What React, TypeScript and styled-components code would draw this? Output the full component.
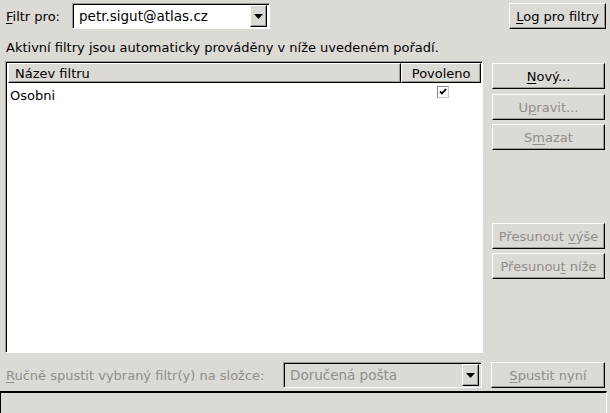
import React from "react";
import styled, { createGlobalStyle, css } from "styled-components";

const Global = createGlobalStyle`
  html, body { margin: 0; padding: 0; background: #dcdad5; }
  body { font-family: "DejaVu Sans", sans-serif; font-size: 13px; color: #000; }
  #root { width: 610px; height: 413px; overflow: hidden; }
`;

const raised = css`
  border: 1px solid;
  border-color: #ffffff #000000 #000000 #ffffff;
  box-shadow: inset -1px -1px 0 #9d9b96;
`;

const sunken = css`
  border: 1px solid;
  border-color: #9d9b96 #ffffff #ffffff #9d9b96;
  box-shadow: inset 1px 1px 0 #000000;
`;

const Window = styled.div`
  width: 610px;
  height: 413px;
  display: flex;
  flex-direction: column;
  box-sizing: border-box;
`;

const TopRow = styled.div`
  display: flex;
  align-items: center;
  height: 26px;
  margin-top: 3px;
  padding: 0 4px 0 6px;
`;

const Label = styled.span<{ $disabled?: boolean }>`
  color: ${(p) => (p.$disabled ? "#8f8e8a" : "#000")};
  white-space: pre;
`;

const Combo = styled.div<{ $width: number; $disabled?: boolean }>`
  ${sunken};
  box-sizing: border-box;
  width: ${(p) => p.$width}px;
  height: 26px;
  background: ${(p) => (p.$disabled ? "#dcdad5" : "#ffffff")};
  display: flex;
  align-items: center;
  padding: 0 1px 0 0;
`;

const ComboText = styled.span<{ $disabled?: boolean }>`
  flex: 1;
  padding-left: 6px;
  font-size: 13.5px;
  color: ${(p) => (p.$disabled ? "#8f8e8a" : "#000")};
  white-space: nowrap;
`;

const ArrowBtn = styled.div`
  ${raised};
  box-sizing: border-box;
  width: 17px;
  height: 22px;
  background: #dcdad5;
  display: flex;
  align-items: center;
  justify-content: center;
  margin-right: 1px;
`;

const Spacer = styled.div`
  flex: 1;
`;

const Gap = styled.div<{ $w: number }>`
  width: ${(p) => p.$w}px;
  flex-shrink: 0;
`;

const Button = styled.div<{ $disabled?: boolean; $width?: number }>`
  ${raised};
  box-sizing: border-box;
  width: ${(p) => (p.$width ? `${p.$width}px` : "auto")};
  height: 26px;
  background: #dcdad5;
  display: flex;
  align-items: center;
  justify-content: center;
  color: ${(p) => (p.$disabled ? "#8f8e8a" : "#000")};
  white-space: pre;
  font-size: 13px;
`;

const U = styled.span`
  text-decoration: underline;
  text-underline-offset: 2px;
`;

const Description = styled.div`
  height: 15px;
  margin-top: 11px;
  padding-left: 6px;
  line-height: 15px;
`;

const Main = styled.div`
  display: flex;
  margin-top: 6px;
  padding: 0 5px 0 5px;
  gap: 9px;
  height: 292px;
`;

const List = styled.div`
  ${sunken};
  box-sizing: border-box;
  width: 478px;
  height: 292px;
  background: #ffffff;
  padding: 1px 1px;
  display: flex;
  flex-direction: column;
`;

const HeaderRow = styled.div`
  display: flex;
  height: 20px;
  margin-left: 1px;
`;

const HeaderCell = styled.div<{ $width: number; $align?: string }>`
  ${raised};
  box-sizing: border-box;
  width: ${(p) => p.$width}px;
  height: 20px;
  background: #dcdad5;
  display: flex;
  align-items: center;
  justify-content: ${(p) => p.$align || "flex-start"};
  padding-left: ${(p) => (p.$align ? 0 : 6)}px;
`;

const DataRow = styled.div`
  display: flex;
  height: 24px;
  align-items: center;
  margin-left: 1px;
`;

const DataCell = styled.div<{ $width: number; $center?: boolean }>`
  width: ${(p) => p.$width}px;
  display: flex;
  justify-content: ${(p) => (p.$center ? "center" : "flex-start")};
  padding-left: ${(p) => (p.$center ? 0 : 2)}px;
  box-sizing: border-box;
`;

const Check = styled.div`
  box-sizing: border-box;
  width: 12px;
  height: 12px;
  border: 1px solid #8a8985;
  border-right-color: #c8c6c1;
  border-bottom-color: #c8c6c1;
  background: #fff;
  display: flex;
  align-items: center;
  justify-content: center;
  margin-top: -7px;
  margin-left: 4px;
`;

const ButtonCol = styled.div`
  display: flex;
  flex-direction: column;
  width: 114px;
  padding-top: 2px;
`;

const ColGap = styled.div<{ $h: number }>`
  height: ${(p) => p.$h}px;
  flex-shrink: 0;
`;

const BottomRow = styled.div`
  display: flex;
  align-items: center;
  height: 26px;
  margin-top: 9px;
  padding: 0 5px 0 6px;
`;

const StatusBar = styled.div`
  box-sizing: border-box;
  margin-top: 3px;
  height: 22px;
  margin-right: 3px;
  border-top: 2px solid #000;
  border-left: 1px solid #000;
  border-right: 1px solid #ffffff;
  background: #dcdad5;
`;

const Arrow = () => (
  <svg width="9" height="5" viewBox="0 0 9 5">
    <polygon points="0,0 9,0 4.5,5" fill="#000" />
  </svg>
);

const Tick = () => (
  <svg width="8" height="7" viewBox="0 0 8 7">
    <polyline points="1,3.5 3,5.5 7,1" fill="none" stroke="#000" strokeWidth="1.8" />
  </svg>
);

export default function App() {
  return (
    <Window>
      <Global />
      <TopRow>
        <Label>
          <U>F</U>iltr pro:
        </Label>
        <Gap $w={12} />
        <Combo $width={198}>
          <ComboText>petr.sigut@atlas.cz</ComboText>
          <ArrowBtn>
            <Arrow />
          </ArrowBtn>
        </Combo>
        <Spacer />
        <Button $width={97}>
          <Label>
            <U>L</U>og pro filtry
          </Label>
        </Button>
      </TopRow>
      <Description>Aktivní filtry jsou automaticky prováděny v níže uvedeném pořadí.</Description>
      <Main>
        <List>
          <HeaderRow>
            <HeaderCell $width={395}>Název filtru</HeaderCell>
            <HeaderCell $width={80} $align="center">Povoleno</HeaderCell>
          </HeaderRow>
          <DataRow>
            <DataCell $width={395}>Osobni</DataCell>
            <DataCell $width={80} $center>
              <Check>
                <Tick />
              </Check>
            </DataCell>
          </DataRow>
        </List>
        <ButtonCol>
          <Button>
            <Label>
              <U>N</U>ový...
            </Label>
          </Button>
          <ColGap $h={5} />
          <Button $disabled>
            <Label $disabled>
              U<U>p</U>ravit...
            </Label>
          </Button>
          <ColGap $h={4} />
          <Button $disabled>
            <Label $disabled>
              S<U>m</U>azat
            </Label>
          </Button>
          <ColGap $h={73} />
          <Button $disabled>
            <Label $disabled>
              Přesunout <U>v</U>ýše
            </Label>
          </Button>
          <ColGap $h={4} />
          <Button $disabled>
            <Label $disabled>
              Přesunou<U>t</U> níže
            </Label>
          </Button>
        </ButtonCol>
      </Main>
      <BottomRow>
        <Label $disabled>
          <U>R</U>učně spustit vybraný filtr(y) na složce:
        </Label>
        <Spacer />
        <Combo $width={199} $disabled>
          <ComboText $disabled>Doručená pošta</ComboText>
          <ArrowBtn>
            <Arrow />
          </ArrowBtn>
        </Combo>
        <Gap $w={9} />
        <Button $disabled $width={114}>
          <Label $disabled>
            <U>S</U>pustit nyní
          </Label>
        </Button>
      </BottomRow>
      <StatusBar />
    </Window>
  );
}
